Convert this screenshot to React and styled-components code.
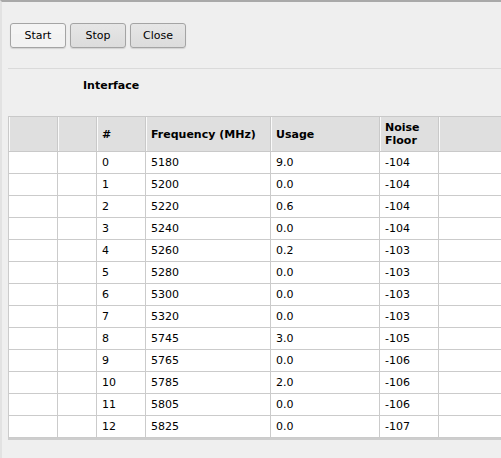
import React from "react";
import styled, { createGlobalStyle } from "styled-components";

const GlobalStyle = createGlobalStyle`
  html, body {
    margin: 0;
    padding: 0;
    background: #efefef;
    overflow: hidden;
  }
  body {
    font-family: "DejaVu Sans", Verdana, sans-serif;
    font-size: 11px;
    color: #000;
  }
`;

const Page = styled.div`
  min-height: 456px;
  border-top: 2px solid #a9a9a9;
  border-left: 2px solid #e2e2e2;
  background: #efefef;
  overflow: hidden;
`;

const Toolbar = styled.div`
  display: flex;
  gap: 4px;
  padding: 21px 0 0 8px;
`;

const Button = styled.button`
  width: 56px;
  height: 25px;
  padding: 0;
  font-family: "DejaVu Sans", Verdana, sans-serif;
  font-size: 11px;
  color: #000;
  border: 1px solid #a4a4a4;
  border-radius: 3px;
  background: ${(props) =>
    props.active
      ? "linear-gradient(#f4f4f4 0%, #f4f4f4 45%, transparent 45%), radial-gradient(circle, #d8d8d8 0.6px, #f2f2f2 0.7px) 0 0 / 2px 2px"
      : "linear-gradient(#e6e6e6, #dcdcdc)"};
  box-shadow: 0 1px 1px rgba(0, 0, 0, 0.12);
`;

const Divider = styled.div`
  height: 1px;
  margin: 20px 0 0 6px;
  background: #dadada;
`;

const Label = styled.div`
  padding: 10px 0 0 81px;
  line-height: 14px;
  font-weight: bold;
`;

const TableFrame = styled.div`
  margin: 23px 0 0 6px;
  padding-bottom: 2px;
  overflow: hidden;
`;

const Table = styled.table`
  width: 560px;
  table-layout: fixed;
  border-collapse: collapse;
  background: #fff;
  box-shadow: 0 2px 0 #cdcdcd;
`;

const HeadCell = styled.th`
  height: 34px;
  padding: 0 5px;
  text-align: left;
  vertical-align: middle;
  font-weight: bold;
  line-height: 13px;
  color: #000;
  background: #dfdfdf;
  border: 1px solid #c9c9c9;
  box-shadow: inset 1px 0 0 #fafafa;
`;

const Cell = styled.td`
  height: 21px;
  padding: 0 5px;
  line-height: 13px;
  border: 1px solid #cbcbcb;
  white-space: nowrap;
`;

const widths = [49, 39, 49, 125, 109, 59, 130];

const rows = [
  [0, 5180, "9.0", -104],
  [1, 5200, "0.0", -104],
  [2, 5220, "0.6", -104],
  [3, 5240, "0.0", -104],
  [4, 5260, "0.2", -103],
  [5, 5280, "0.0", -103],
  [6, 5300, "0.0", -103],
  [7, 5320, "0.0", -103],
  [8, 5745, "3.0", -105],
  [9, 5765, "0.0", -106],
  [10, 5785, "2.0", -106],
  [11, 5805, "0.0", -106],
  [12, 5825, "0.0", -107],
];

export default function App() {
  return (
    <Page>
      <GlobalStyle />
      <Toolbar>
        <Button active>Start</Button>
        <Button>Stop</Button>
        <Button>Close</Button>
      </Toolbar>
      <Divider />
      <Label>Interface</Label>
      <TableFrame>
        <Table>
          <colgroup>
            {widths.map((w, i) => (
              <col key={i} style={{ width: w }} />
            ))}
          </colgroup>
          <thead>
            <tr>
              <HeadCell />
              <HeadCell />
              <HeadCell>#</HeadCell>
              <HeadCell>Frequency (MHz)</HeadCell>
              <HeadCell>Usage</HeadCell>
              <HeadCell>
                Noise
                <br />
                Floor
              </HeadCell>
              <HeadCell />
            </tr>
          </thead>
          <tbody>
            {rows.map((r) => (
              <tr key={r[0]}>
                <Cell />
                <Cell />
                <Cell>{r[0]}</Cell>
                <Cell>{r[1]}</Cell>
                <Cell>{r[2]}</Cell>
                <Cell>{r[3]}</Cell>
                <Cell />
              </tr>
            ))}
          </tbody>
        </Table>
      </TableFrame>
    </Page>
  );
}
